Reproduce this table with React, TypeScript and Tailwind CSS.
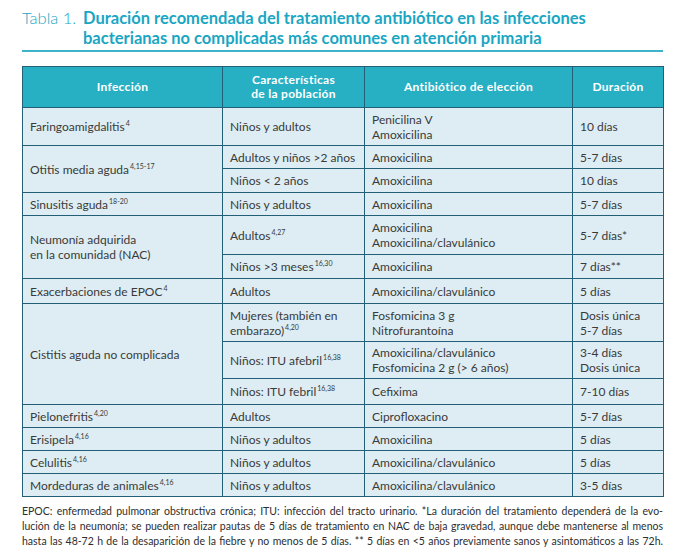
import React from "react";

const Sup = ({ children }: { children: React.ReactNode }) => (
  <span className="text-[7px] leading-none align-[5px] ml-[1px]">{children}</span>
);

const td = "border border-[#245f78] px-[7px] py-0 align-middle leading-[15px]";

export default function App() {
  return (
    <div className="w-[678px] h-[555px] bg-white text-[#3a3a3a]" style={{ fontFamily: "Lato, 'Open Sans', sans-serif" }}>
      <div className="pl-[22px] pr-[15px] pt-[8px]">
        <div className="flex text-[#1aa6c3] text-[16.5px] leading-[20px]">
          <div className="w-[61px] font-light">Tabla 1.</div>
          <div className="font-bold">
            Duración recomendada del tratamiento antibiótico en las infecciones
            <br />
            bacterianas no complicadas más comunes en atención primaria
          </div>
        </div>
        <div className="mt-[2px] h-[2px] w-[641px] bg-[#3fb3ca]" />
        <table className="mt-[14px] w-[641px] border-collapse table-fixed text-[12px] border border-[#5f93aa]">
          <colgroup>
            <col className="w-[200px]" />
            <col className="w-[142px]" />
            <col className="w-[208px]" />
            <col className="w-[91px]" />
          </colgroup>
          <thead>
            <tr className="h-[41px] bg-[#27afc4] text-white font-bold tracking-[0.3px]">
              <th className="border border-[#245f78] text-center font-bold">Infección</th>
              <th className="border border-[#245f78] text-center font-bold leading-[14px]">
                Características
                <br />
                de la población
              </th>
              <th className="border border-[#245f78] text-center font-bold">Antibiótico de elección</th>
              <th className="border border-[#245f78] text-center font-bold">Duración</th>
            </tr>
          </thead>
          <tbody className="bg-[#ddedf3]">
            <tr className="h-[38px]">
              <td className={td}>Faringoamigdalitis<Sup>4</Sup></td>
              <td className={td}>Niños y adultos</td>
              <td className={td}>Penicilina V<br />Amoxicilina</td>
              <td className={td}>10 días</td>
            </tr>
            <tr className="h-[23px]">
              <td className={td} rowSpan={2}>Otitis media aguda<Sup>4,15-17</Sup></td>
              <td className={td}>Adultos y niños &gt;2 años</td>
              <td className={td}>Amoxicilina</td>
              <td className={td}>5-7 días</td>
            </tr>
            <tr className="h-[24px]">
              <td className={td}>Niños &lt; 2 años</td>
              <td className={td}>Amoxicilina</td>
              <td className={td}>10 días</td>
            </tr>
            <tr className="h-[23px]">
              <td className={td}>Sinusitis aguda<Sup>18-20</Sup></td>
              <td className={td}>Niños y adultos</td>
              <td className={td}>Amoxicilina</td>
              <td className={td}>5-7 días</td>
            </tr>
            <tr className="h-[39px]">
              <td className={td} rowSpan={2}>Neumonía adquirida<br />en la comunidad (NAC)</td>
              <td className={td}>Adultos<Sup>4,27</Sup></td>
              <td className={td}>Amoxicilina<br />Amoxicilina/clavulánico</td>
              <td className={td}>5-7 días*</td>
            </tr>
            <tr className="h-[24px]">
              <td className={td}>Niños &gt;3 meses<Sup>16,30</Sup></td>
              <td className={td}>Amoxicilina</td>
              <td className={td}>7 días**</td>
            </tr>
            <tr className="h-[25px]">
              <td className={td}>Exacerbaciones de EPOC<Sup>4</Sup></td>
              <td className={td}>Adultos</td>
              <td className={td}>Amoxicilina/clavulánico</td>
              <td className={td}>5 días</td>
            </tr>
            <tr className="h-[38px]">
              <td className={td} rowSpan={3}>Cistitis aguda no complicada</td>
              <td className={td}>Mujeres (también en embarazo)<Sup>4,20</Sup></td>
              <td className={td}>Fosfomicina 3 g<br />Nitrofurantoína</td>
              <td className={td}>Dosis única<br />5-7 días</td>
            </tr>
            <tr className="h-[37px]">
              <td className={td}>Niños: ITU afebril<Sup>16,38</Sup></td>
              <td className={td}>Amoxicilina/clavulánico<br />Fosfomicina 2 g (&gt; 6 años)</td>
              <td className={td}>3-4 días<br />Dosis única</td>
            </tr>
            <tr className="h-[26px]">
              <td className={td}>Niños: ITU febril<Sup>16,38</Sup></td>
              <td className={td}>Cefixima</td>
              <td className={td}>7-10 días</td>
            </tr>
            <tr className="h-[23px]">
              <td className={td}>Pielonefritis<Sup>4,20</Sup></td>
              <td className={td}>Adultos</td>
              <td className={td}>Ciprofloxacino</td>
              <td className={td}>5-7 días</td>
            </tr>
            <tr className="h-[23px]">
              <td className={td}>Erisipela<Sup>4,16</Sup></td>
              <td className={td}>Niños y adultos</td>
              <td className={td}>Amoxicilina</td>
              <td className={td}>5 días</td>
            </tr>
            <tr className="h-[23px]">
              <td className={td}>Celulitis<Sup>4,16</Sup></td>
              <td className={td}>Niños y adultos</td>
              <td className={td}>Amoxicilina/clavulánico</td>
              <td className={td}>5 días</td>
            </tr>
            <tr className="h-[23px]">
              <td className={td}>Mordeduras de animales<Sup>4,16</Sup></td>
              <td className={td}>Niños y adultos</td>
              <td className={td}>Amoxicilina/clavulánico</td>
              <td className={td}>3-5 días</td>
            </tr>
          </tbody>
        </table>
        <div className="mt-[7px] w-[641px] text-[10.5px] leading-[15px] text-[#2e2e2e]">
          <div className="whitespace-nowrap text-justify [text-align-last:justify]">
            EPOC: enfermedad pulmonar obstructiva crónica; ITU: infección del tracto urinario. *La duración del tratamiento dependerá de la evo-
          </div>
          <div className="whitespace-nowrap text-justify [text-align-last:justify]">
            lución de la neumonía; se pueden realizar pautas de 5 días de tratamiento en NAC de baja gravedad, aunque debe mantenerse al menos
          </div>
          <div className="whitespace-nowrap text-justify [text-align-last:justify]">
            hasta las 48-72 h de la desaparición de la fiebre y no menos de 5 días. ** 5 días en &lt;5 años previamente sanos y asintomáticos a las 72h.
          </div>
        </div>
      </div>
    </div>
  );
}
